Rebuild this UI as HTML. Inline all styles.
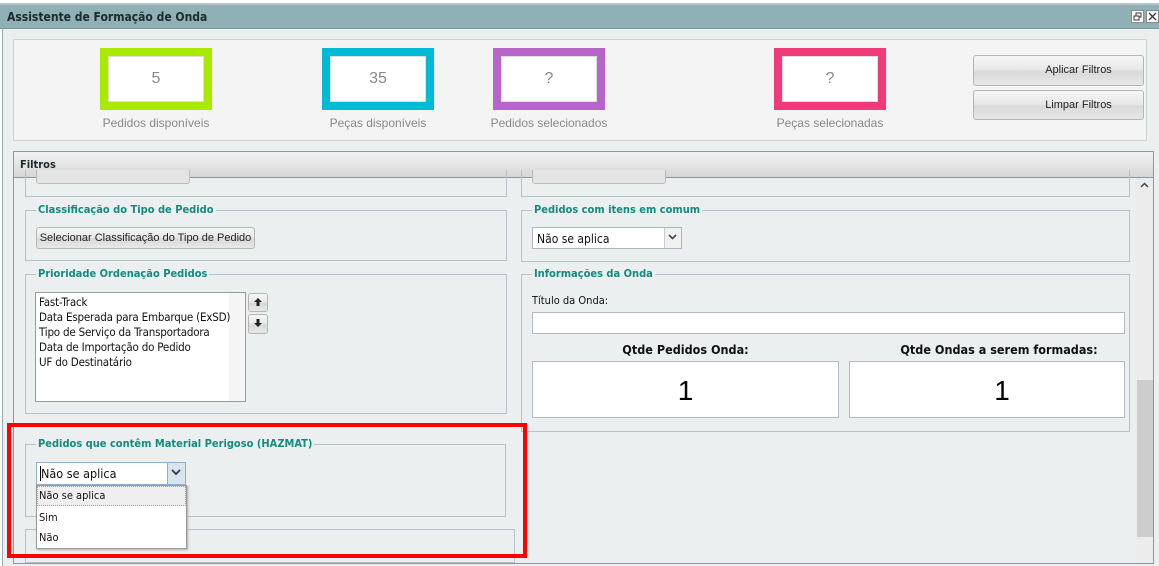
<!DOCTYPE html>
<html><head><meta charset="utf-8"><style>
*{margin:0;padding:0;box-sizing:border-box}
body{width:1159px;height:566px;overflow:hidden;background:#fff;font-family:"Liberation Sans",Tahoma,sans-serif;position:relative}
.a{position:absolute}
.fs{position:absolute;border:1px solid #b9bfcc}
.lg{position:absolute;top:-8px;left:10px;background:#eceff0;padding:0 2px;color:#138a7e;font-weight:bold;font-size:11px;font-family:"DejaVu Sans Condensed","DejaVu Sans",sans-serif}
.stat{position:absolute;width:112px;height:62px;border:8px solid;background:#fff}
.stat div{position:absolute;inset:0;border:1px solid #ddd;text-align:center;line-height:44px;font-size:16px;color:#888}
.lab{position:absolute;width:200px;text-align:center;font-size:12px;color:#888;top:116px}
.btn{position:absolute;border:1px solid #b5b5b5;border-radius:3px;background:linear-gradient(#f6f6f6,#e9e9e9 45%,#d9d9d9 55%,#e8e8e8);font-size:11px;color:#222;text-align:center}
.t{font-family:"DejaVu Sans Condensed","DejaVu Sans",sans-serif;font-size:11px;color:#111}
</style></head><body>
<div class="a" style="left:0;top:3px;width:1159px;height:2px;background:#b8c4c8"></div>
<div class="a" style="left:0;top:5px;width:1159px;height:24px;background:#8fb1b5;border-bottom:1px solid #7a9a9e"></div>
<div class="a" style="left:7px;top:10px;font-size:12px;font-weight:bold;color:#1c2a2c;font-family:'DejaVu Sans Condensed','DejaVu Sans',sans-serif">Assistente de Formação de Onda</div>
<svg class="a" style="left:1131px;top:10px" width="13" height="13"><rect x="0.5" y="0.5" width="12" height="12" fill="#fff" stroke="#889"/><rect x="5" y="3" width="5" height="4" fill="none" stroke="#333"/><rect x="3" y="6" width="5" height="4" fill="#fff" stroke="#333"/></svg>
<svg class="a" style="left:1146px;top:10px" width="13" height="13"><rect x="0.5" y="0.5" width="12" height="12" fill="#fff" stroke="#889"/><path d="M3 3L10 10M10 3L3 10" stroke="#333" stroke-width="1.3"/></svg>
<div class="a" style="left:2px;top:29px;width:1157px;height:537px;background:#eceff0;border-left:1px solid #9aa"></div>
<div class="a" style="left:13px;top:39px;width:1134px;height:102px;background:#f4f4f4;border:1px solid #d0d0d0"></div>
<div class="stat" style="left:100px;top:48px;border-color:#aaea00"><div>5</div></div>
<div class="stat" style="left:322px;top:48px;border-color:#00bad6"><div>35</div></div>
<div class="stat" style="left:493px;top:48px;border-color:#b665c8"><div>?</div></div>
<div class="stat" style="left:774px;top:48px;border-color:#f13a7a"><div>?</div></div>
<div class="lab" style="left:56px">Pedidos disponíveis</div>
<div class="lab" style="left:278px">Peças disponíveis</div>
<div class="lab" style="left:449px">Pedidos selecionados</div>
<div class="lab" style="left:730px">Peças selecionadas</div>
<div class="btn" style="left:973px;top:55px;width:171px;height:31px;line-height:29px;padding-left:40px">Aplicar Filtros</div>
<div class="btn" style="left:973px;top:90px;width:171px;height:30px;line-height:28px;padding-left:40px">Limpar Filtros</div>
<div class="a" style="left:13px;top:151px;width:1141px;height:27px;border:1px solid #8a9a9c;background:linear-gradient(#f2f2f2,#d6d6d6)"></div>
<div class="a t" style="left:20px;top:158px;font-weight:bold;color:#1c2a2c">Filtros</div>
<div class="a" style="left:13px;top:178px;width:1141px;height:386px;border-left:1px solid #8a9a9c;border-right:1px solid #8a9a9c;border-bottom:1px solid #8a9a9c"></div>
<div class="a" style="left:1136px;top:178px;width:17px;height:385px;background:#ececec"></div>
<div class="a" style="left:1137px;top:380px;width:16px;height:157px;background:#cdcdcd"></div>
<svg class="a" style="left:1140px;top:182px" width="9" height="6"><path d="M1 5L4.5 1.5L8 5" stroke="#444" stroke-width="1.5" fill="none"/></svg>
<div class="fs" style="left:25px;top:170px;width:482px;height:27px;border-top:none"></div>
<div class="a" style="left:36px;top:170px;width:154px;height:14px;border:1px solid #bbb;border-top:none;border-radius:0 0 3px 3px;background:#e4e4e4"></div>
<div class="fs" style="left:521px;top:170px;width:609px;height:27px;border-top:none"></div>
<div class="a" style="left:532px;top:170px;width:134px;height:14px;border:1px solid #bbb;border-top:none;border-radius:0 0 3px 3px;background:#e4e4e4"></div>
<div class="fs" style="left:25px;top:210px;width:482px;height:51px"><div class="lg">Classificação do Tipo de Pedido</div></div>
<div class="btn" style="left:36px;top:227px;width:219px;height:22px;line-height:20px;font-size:11px">Selecionar Classificação do Tipo de Pedido</div>
<div class="fs" style="left:521px;top:210px;width:609px;height:52px"><div class="lg">Pedidos com itens em comum</div></div>
<div class="a" style="left:532px;top:227px;width:150px;height:22px;background:#fff;border:1px solid #b0b4c0"></div>
<div class="a t" style="left:537px;top:232px;font-size:12px">Não se aplica</div>
<div class="a" style="left:664px;top:228px;width:17px;height:20px;background:#f0f0f0;border-left:1px solid #ccc"></div>
<svg class="a" style="left:668px;top:234px" width="9" height="6"><path d="M1 1L4.5 4.5L8 1" stroke="#445" stroke-width="1.6" fill="none"/></svg>
<div class="fs" style="left:25px;top:274px;width:482px;height:140px"><div class="lg">Prioridade Ordenação Pedidos</div></div>
<div class="a" style="left:35px;top:292px;width:211px;height:110px;background:#fff;border:1px solid #999"></div>
<div class="a" style="left:229px;top:293px;width:16px;height:108px;background:#f5f5f5"></div>
<div class="a t" style="left:39px;top:295px;line-height:15px;font-size:11.5px;letter-spacing:-0.2px">Fast-Track<br>Data Esperada para Embarque (ExSD)<br>Tipo de Serviço da Transportadora<br>Data de Importação do Pedido<br>UF do Destinatário</div>
<div class="btn" style="left:248px;top:293px;width:20px;height:19px"></div>
<svg class="a" style="left:253px;top:297px" width="10" height="10"><path d="M5 1L1 5H3.5V9H6.5V5H9Z" fill="#222"/></svg>
<div class="btn" style="left:248px;top:314px;width:20px;height:20px"></div>
<svg class="a" style="left:253px;top:318px" width="10" height="10"><path d="M5 9L1 5H3.5V1H6.5V5H9Z" fill="#222"/></svg>
<div class="fs" style="left:521px;top:274px;width:609px;height:158px"><div class="lg">Informações da Onda</div></div>
<div class="a t" style="left:532px;top:294px;font-size:11px">Título da Onda:</div>
<div class="a" style="left:532px;top:312px;width:593px;height:22px;background:#fff;border:1px solid #b5b8c4"></div>
<div class="a t" style="left:532px;top:342px;width:307px;text-align:center;font-weight:bold;font-size:12.5px">Qtde Pedidos Onda:</div>
<div class="a t" style="left:849px;top:342px;width:300px;text-align:center;font-weight:bold;font-size:12.5px">Qtde Ondas a serem formadas:</div>
<div class="a" style="left:532px;top:361px;width:307px;height:57px;background:#fff;border:1px solid #b5b8c4;text-align:center;font-size:28px;line-height:57px">1</div>
<div class="a" style="left:849px;top:361px;width:276px;height:57px;background:#fff;border:1px solid #b5b8c4;text-align:center;font-size:28px;line-height:57px;padding-left:30px">1</div>
<div class="fs" style="left:25px;top:444px;width:481px;height:73px"><div class="lg">Pedidos que contêm Material Perigoso (HAZMAT)</div></div>
<div class="fs" style="left:25px;top:529px;width:490px;height:34px"></div>
<div class="a" style="left:36px;top:462px;width:150px;height:23px;background:#fff;border:1px solid #8fb0d0"></div>
<div class="a" style="left:40px;top:466px;width:1px;height:15px;background:#000"></div>
<div class="a t" style="left:41px;top:466px;font-size:12.5px">Não se aplica</div>
<div class="a" style="left:167px;top:463px;width:18px;height:21px;background:#d8e4ea;border-left:1px solid #8fb0d0"></div>
<svg class="a" style="left:171px;top:469px" width="10" height="7"><path d="M1 1L5 5L9 1" stroke="#334" stroke-width="1.7" fill="none"/></svg>
<div class="a" style="left:36px;top:485px;width:151px;height:64px;background:#fff;border:1px solid #999;box-shadow:1px 1px 2px #aaa"></div>
<div class="a" style="left:37px;top:486px;width:149px;height:20px;background:#efefef;border:1px dotted #8a9ec8"></div>
<div class="a t" style="left:39px;top:489px">Não se aplica</div>
<div class="a t" style="left:39px;top:511px">Sim</div>
<div class="a t" style="left:39px;top:531px">Não</div>
<div class="a" style="left:7px;top:423px;width:520px;height:135px;border:4px solid #f00"></div>
</body></html>
